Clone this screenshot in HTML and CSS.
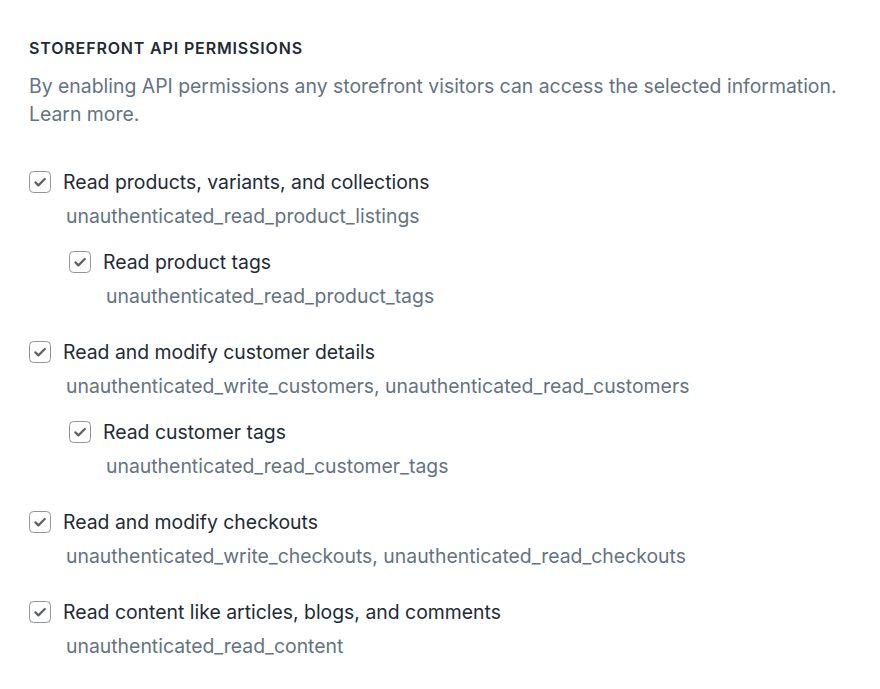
FILE: index.html
```html
<!DOCTYPE html>
<html lang="en">
<head>
<meta charset="utf-8">
<title>Storefront API permissions</title>
<link rel="stylesheet" href="styles.css">
</head>
<body>
<section class="panel">
  <h2 class="heading">Storefront API permissions</h2>
  <p class="intro">By enabling API permissions any storefront visitors can access the selected information.<br><a class="link" href="#">Learn more.</a></p>

  <ul class="perms">
    <li class="perm">
      <label class="row"><span class="box"><svg viewBox="0 0 20 20"><path d="M5.4 10.4l3 3L14.8 7"/></svg></span><span class="label">Read products, variants, and collections</span></label>
      <div class="scope">unauthenticated_read_product_listings</div>
      <ul class="perms sub">
        <li class="perm">
          <label class="row"><span class="box"><svg viewBox="0 0 20 20"><path d="M5.4 10.4l3 3L14.8 7"/></svg></span><span class="label">Read product tags</span></label>
          <div class="scope">unauthenticated_read_product_tags</div>
        </li>
      </ul>
    </li>
    <li class="perm">
      <label class="row"><span class="box"><svg viewBox="0 0 20 20"><path d="M5.4 10.4l3 3L14.8 7"/></svg></span><span class="label">Read and modify customer details</span></label>
      <div class="scope">unauthenticated_write_customers, unauthenticated_read_customers</div>
      <ul class="perms sub">
        <li class="perm">
          <label class="row"><span class="box"><svg viewBox="0 0 20 20"><path d="M5.4 10.4l3 3L14.8 7"/></svg></span><span class="label">Read customer tags</span></label>
          <div class="scope">unauthenticated_read_customer_tags</div>
        </li>
      </ul>
    </li>
    <li class="perm">
      <label class="row"><span class="box"><svg viewBox="0 0 20 20"><path d="M5.4 10.4l3 3L14.8 7"/></svg></span><span class="label">Read and modify checkouts</span></label>
      <div class="scope">unauthenticated_write_checkouts, unauthenticated_read_checkouts</div>
    </li>
    <li class="perm">
      <label class="row"><span class="box"><svg viewBox="0 0 20 20"><path d="M5.4 10.4l3 3L14.8 7"/></svg></span><span class="label">Read content like articles, blogs, and comments</span></label>
      <div class="scope">unauthenticated_read_content</div>
    </li>
  </ul>
</section>
</body>
</html>
```

FILE: styles.css
```css
* { box-sizing: border-box; }
html, body { margin: 0; background: #ffffff; }
body {
  font-family: Inter, "Noto Sans", "Liberation Sans", sans-serif;
  color: #212b36;
}
.panel {
  padding: 38px 29px 20px 29px;
}
.heading {
  margin: 0;
  font-size: 16px;
  line-height: 20px;
  font-weight: 600;
  text-transform: uppercase;
  letter-spacing: 0.85px;
  color: #212b36;
}
.intro {
  margin: 14px 0 0 0;
  font-size: 19.4px;
  line-height: 28px;
  color: #637381;
}
.link { color: #637381; text-decoration: none; }
.perms {
  list-style: none;
  margin: 0;
  padding: 0;
}
.panel > .perms { margin-top: 40px; }
.perm + .perm { margin-top: 28px; }
.sub { margin-top: 18px; padding-left: 40px; }
.row {
  display: flex;
  align-items: center;
  gap: 12px;
  height: 28px;
}
.box {
  flex: none;
  width: 22px;
  height: 22px;
  border: 1.5px solid #8f959b;
  border-radius: 4.5px;
  background: #fff;
  display: flex;
  align-items: center;
  justify-content: center;
}
.box svg {
  width: 20px;
  height: 20px;
  fill: none;
  stroke: #5f6368;
  stroke-width: 2.2;
  stroke-linecap: round;
  stroke-linejoin: round;
}
.label {
  font-size: 19.4px;
  line-height: 28px;
  color: #212b36;
}
.scope {
  margin-top: 6px;
  padding-left: 37px;
  font-size: 19.4px;
  line-height: 28px;
  color: #637381;
}
```
